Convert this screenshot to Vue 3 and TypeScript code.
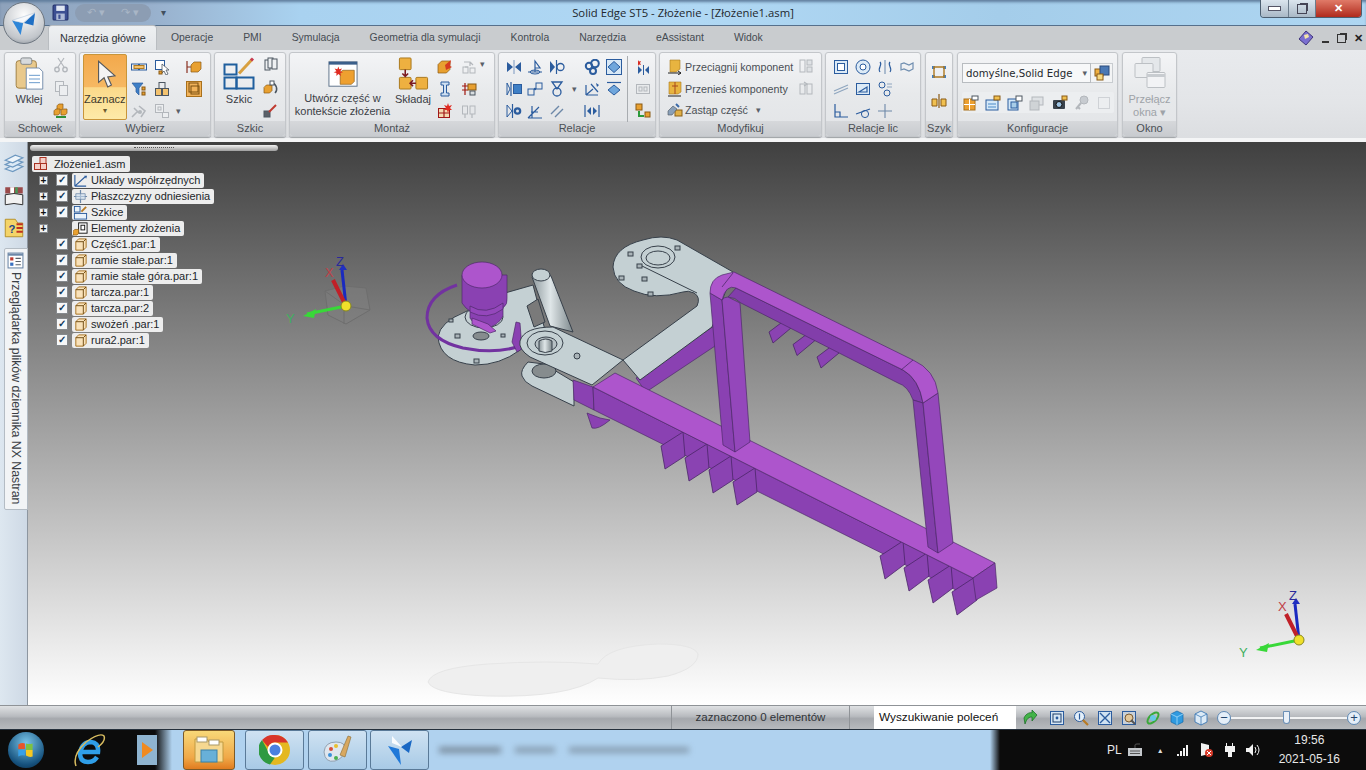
<script setup lang="ts">
// Ikony wstążki rysowane w siatce 16x16
const B = '#2b5c9e'
const O = '#e8a030'
const G = '#b3b7bc'
const D = '#4c5660'
const line = (d: string, c = B, w = 1.2) => `<path d="${d}" fill="none" stroke="${c}" stroke-width="${w}"/>`
const box = (x: number, y: number, w: number, h: number, f = 'none', c = B) =>
  `<rect x="${x}" y="${y}" width="${w}" height="${h}" fill="${f}" stroke="${c}"/>`
const cube = (x: number, y: number, s: number, c = O) =>
  `<path d="M${x} ${y + s * 0.3}l${s * 0.3} -${s * 0.3}h${s * 0.7}v${s * 0.7}l-${s * 0.3} ${s * 0.3}h-${s * 0.7}z" fill="${c}" stroke="#8a5a14" stroke-width=".7"/>`

const icons: Record<string, string> = {
  floppy: `<rect x="1" y="1" width="14" height="14" rx="1" fill="#3c4f92" stroke="#23306a"/><rect x="4" y="1.500" width="8" height="5" fill="#dfe6f2"/><rect x="4" y="9" width="8" height="6" fill="#aebbd6"/><rect x="6" y="10" width="2" height="4" fill="#3c4f92"/>`,
  cut: line('M5 10L11 1M11 10L5 1', G) + `<circle cx="4" cy="12.5" r="2.2" fill="none" stroke="${G}" stroke-width="1.4"/><circle cx="12" cy="12.5" r="2.2" fill="none" stroke="${G}" stroke-width="1.4"/>`,
  copy: box(2.5, 1.5, 8, 10, '#eceef0', G) + box(6.5, 5.5, 8, 10, '#eceef0', G),
  painter: cube(4, 1, 6) + cube(1, 6, 6) + cube(8, 6, 6) + line('M3 14h10', '#2f8f3a', 2),
  select: box(0.5, 5, 7, 6) + box(8.5, 5, 7, 6) + box(3, 6.5, 10, 3, '#f3c26e', '#b07a20'),
  selcur: box(1.5, 1.5, 9, 9, '#fff') + `<path d="M8 5l7 6h-3l2 4-2 1-2-4-2 2z" fill="#fff" stroke="${D}" stroke-width=".8"/>` + box(5, 12, 3, 3, O, '#8a5a14'),
  funnel: `<path d="M1 2h11L8 7v7L5 11V7z" fill="#3e7fc6" stroke="${B}" stroke-width=".7"/>` + box(11, 6, 3, 3, O, '#8a5a14') + box(11, 11, 3, 3, O, '#8a5a14'),
  tower: box(5, 1.5, 6, 6, 'none', D) + box(1.5, 7.5, 6, 7, '#f3c26e', D) + box(8.5, 7.5, 6, 7, '#f3c26e', D),
  gear: line('M1 14L6 9M3 5l5 5M8 3l6 5-4 6', G, 1.6) + `<circle cx="9" cy="9" r="2" fill="${G}"/>`,
  graybox: box(1.5, 1.5, 8, 8, '#eceef0', G) + box(8.5, 9.5, 6, 5, '#eceef0', G) + box(4, 4, 3, 3, 'none', G),
  plane: line('M1 2v12M1 8h4', '#8a3020') + cube(5, 3, 10),
  active: box(0.5, 0.5, 15, 15, '#f2b35a', '#a8701c') + box(3, 2, 9, 9, 'none', '#7a5010') + box(5, 5, 8, 8, 'none', '#7a5010'),
  sk2: box(2, 3, 5, 10, '#eef0f2', D) + box(5, 1, 5, 10, '#eef0f2', D) + box(9, 2, 5, 10, '#eef0f2', D),
  sk3: cube(1, 5, 8) + `<path d="M9 3a6 6 0 0 1 3 10" fill="none" stroke="${D}" stroke-width="1.5"/>` + box(7, 1, 4, 4, '#fff', D),
  sk4: box(1, 8, 6, 6, '#5a6068', D) + line('M6 9L13 2', '#c03a30', 2),
  flame: cube(1, 2, 12) + `<path d="M8 6l6-5-1 6 2 1-6 3z" fill="#d63a20"/>`,
  bolts: line('M3 3h6v4M9 3l3 3M4 8h3', G) + box(2, 8, 5, 6, 'none', G) + box(9, 9, 5, 5, 'none', G),
  screw: `<path d="M4 1h8v3H9.5v8H12v3H4v-3h2.5V4H4z" fill="#cfe0f2" stroke="${B}"/>`,
  link: line('M4 2v12M1 5h6M1 9h6', '#a01810') + box(7, 3, 8, 6, O, '#8a5a14') + box(9, 10, 5, 4, '#d8dde0', D),
  redbox: box(1.5, 5.5, 11, 9, '#f4d9b0', '#a01818') + line('M7 5.5v9M1.5 10h11', '#a01818') + `<path d="M11 0l1 3 3-1-2 3 2 2-3 0-1 3-1-3-3 0 2-2-2-3 3 1z" fill="#e02a20"/>`,
  graybolts: box(1.5, 3, 5, 8, 'none', G) + box(9, 3, 5, 8, 'none', G) + line('M4 11v4M11 11v4', G),
  mirror: `<path d="M1 3l6 5-6 5zM15 3L9 8l6 5z" fill="${B}"/><path d="M8 1v14" stroke="${B}" stroke-width=".6"/>`,
  pin: line('M1 13h14M8 13V2l5 7H8') + `<ellipse cx="8" cy="13" rx="5" ry="2" fill="none" stroke="${B}"/>`,
  tricirc: `<path d="M1 2l5 6-5 6z" fill="${B}"/>` + line('M7.5 1v14') + `<circle cx="11.5" cy="8" r="3.5" fill="none" stroke="${B}" stroke-width="1.3"/>`,
  gears: `<circle cx="11" cy="4.5" r="3.8" fill="none" stroke="${B}" stroke-width="2"/><circle cx="5" cy="7" r="3.2" fill="none" stroke="${B}" stroke-width="2"/><circle cx="9" cy="12" r="3" fill="none" stroke="${B}" stroke-width="2"/>`,
  diamond: box(0.5, 0.5, 15, 15, '#d8e8f6', B) + `<path d="M8 2.5l6 5.5-6 5.5L2 8z" fill="#6fa6dc" stroke="${B}"/>`,
  redmirror: `<path d="M3 7l4 4-4 4zM14 7l-4 4 4 4z" fill="${B}"/><path d="M8.5 6v10" stroke="${B}"/><path d="M3 1l1 1.5L6 2l-1 2 1 2-2-.5L3 7z" fill="#d82a20"/>`,
  rectmir: line('M5 1v14') + `<path d="M1 2l3 6-3 6z" fill="none" stroke="${B}"/>` + box(7.5, 3.5, 8, 9, '#3e7fc6'),
  squares: box(1, 8, 6, 6) + box(9, 2, 6, 6) + `<circle cx="8" cy="8" r="1.2" fill="${B}"/>`,
  cone: `<path d="M3 1h10L8 8z" fill="none" stroke="${B}" stroke-width="1.3"/><circle cx="8" cy="11" r="4" fill="none" stroke="${B}" stroke-width="1.3"/>`,
  axes: line('M2 14L9 8M2 14V4M2 14h12M7 3l7 8', B) + `<path d="M12 2l3 2-2 2z" fill="${B}"/>`,
  diamond2: line('M1 1.5h14') + `<path d="M8 4l6 5-6 5-6-5z" fill="#6fa6dc" stroke="${B}"/>`,
  ringmir: `<path d="M1 2l5 6-5 6z" fill="none" stroke="${B}"/>` + line('M6.5 1v14') + `<circle cx="11.5" cy="8" r="3.8" fill="${B}"/><circle cx="11.5" cy="8" r="1.5" fill="#dfe3e7"/>`,
  angle: line('M1 15h14M1 15L12 4M5 3v12M4 9h7', B),
  parallel: line('M2 11L10 3M6 14L14 6', '#6d88a8', 1.4),
  center: line('M1 2v12M15 2v12') + `<path d="M7 4L3 8l4 4zM9 4l4 4-4 4z" fill="${B}"/>`,
  ghost: box(1.5, 3.5, 13, 9, '#e8eaec', G) + box(4, 6, 3, 4, 'none', G) + box(9, 6, 3, 4, 'none', G),
  swap: box(1, 1, 6, 6, O, '#8a5a14') + line('M4 8v5h5', '#2b9a3a', 2) + box(10, 9, 5, 5, O, '#8a5a14'),
  drag: `<path d="M3 1h10v9l-4 3H3z" fill="#e8b440" stroke="#a8781c" stroke-width=".6"/>` + line('M1 14h13M11 12l3 2-3 2', '#202020', 1),
  move: `<path d="M2 1h12v10l-3 2H2z" fill="#e8b440" stroke="#a8781c" stroke-width=".6"/>` + line('M8 1v12M5 5h6', '#a8481c', 1) + line('M1 15h13', '#202020', 1),
  replace: box(8, 8, 7, 6, '#e0b048', '#8a6018') + `<path d="M1 13V9l5-5 4 3-5 6z" fill="#8aa0b8" stroke="${D}" stroke-width=".6"/>` + line('M9 2l3 3', '#3b6aa8', 2),
  modg1: box(2, 2, 5, 12, 'none', G) + box(9, 2, 5, 5, '#dfe2e5', G) + box(9, 9, 5, 5, '#dfe2e5', G),
  modg2: box(2, 4, 5, 10, 'none', G) + box(9, 4, 5, 10, 'none', G) + line('M6 2l3 2-3 2', G),
  sqsq: box(1.5, 1.5, 13, 13, '#dceaf6') + box(4.5, 4.5, 7, 7, '#fff'),
  ring: `<circle cx="8" cy="8" r="7" fill="#dceaf6" stroke="${B}"/><circle cx="8" cy="8" r="3" fill="#fff" stroke="${B}"/>`,
  sym: line('M8 1v14', '#7d98b8') + `<path d="M3 3c3 3-3 6 0 10M13 3c-3 3 3 6 0 10" fill="none" stroke="${B}" stroke-width="1.2"/>`,
  sym2: line('M2 5v6l3-1 5 2 4-2V4l-4 2-5-2z', '#6f8eb0'),
  slash: line('M1 10l14-6M1 13l14-6', '#8fa6bf', 1.2),
  facer: box(1.5, 2.5, 13, 11, '#dceaf6') + line('M4 11l8-5v5z'),
  circles: `<circle cx="5" cy="4" r="3" fill="none" stroke="${B}"/><circle cx="10" cy="12" r="3" fill="none" stroke="${B}"/>` + line('M10 3h5M10 6h5', '#8fa6bf'),
  corner: line('M2 1v13h13M2 9h5v5', B),
  tang: line('M1 11l14-5') + `<circle cx="10" cy="11" r="3.6" fill="none" stroke="${B}"/>`,
  plus: line('M8 1v14M1 8h14', '#6d88a8', 1.1),
  pat1: `<rect x="1" y="2" width="3" height="3" fill="#3e7fc6"/><rect x="12" y="2" width="3" height="3" fill="#3e7fc6"/><rect x="1" y="11" width="3" height="3" fill="#3e7fc6"/><rect x="12" y="11" width="3" height="3" fill="#3e7fc6"/>` + line('M3 3h10v10H3z', '#b07a20', 1.4),
  pat2: line('M8 1v14', '#8a5a14') + `<path d="M1 6h5v7H1zM10 6h5v7h-5z" fill="#f0c050" stroke="#8a5a14"/>`,
  save: box(1, 4, 8, 7, '#f0b040', '#8a5a14') + box(6, 1, 9, 9, '#4a78b4', '#2a4a7c') + box(3, 9, 6, 6, '#f7d880', '#8a5a14'),
  cfg1: `<rect x="1" y="4" width="11" height="11" fill="#eca030" stroke="#a8701c"/><path d="M1 9.5h11M6.5 4v11" stroke="#fff"/>` + box(9, 1, 6, 4, '#fff', D),
  cfg2: box(1, 5, 12, 10, '#d4e8f8') + line('M3 9h8M3 12h8', '#4a8ac8') + box(9, 1, 6, 4, '#f0c050', '#8a5a14'),
  cfg3: box(1, 4, 10, 11, '#d4e8f8') + box(4, 7, 6, 6, '#a8cde8') + box(9, 1, 6, 5, '#fff', D),
  cfg4: box(3, 2, 11, 8, '#dfe2e5', G) + box(1, 6, 9, 9, '#cfd3d6', G),
  camera: `<rect x="1" y="5" width="12" height="9" rx="1" fill="#39424c"/><circle cx="7" cy="9.5" r="3" fill="#9ec4e4" stroke="#111"/>` + box(10, 1, 5, 4, '#f0c050', '#8a5a14'),
  key: `<circle cx="10" cy="5" r="4" fill="#c7cbd0" stroke="${G}"/>` + line('M7 8l-5 6M4 12l2 2', G, 2),
  dots: `<rect x="2.5" y="2.5" width="11" height="11" fill="none" stroke="${G}" stroke-dasharray="1 1"/>`,
  arrow: `<path d="M2 8c2-5 7-6 8-5V0l5 5-5 6V7C7 7 5 8 3 14z" fill="#43b348" stroke="#146a20" stroke-width=".7"/>`,
  zoomArea: box(1.5, 1.5, 13, 13, '#d6e6f4') + box(4, 4, 8, 8, 'none', '#1d3c68') + `<circle cx="8" cy="8" r="1.4" fill="${B}"/>`,
  zoomLens: `<circle cx="6.5" cy="6.5" r="5" fill="#e4f0fa" stroke="${B}"/>` + line('M10 10l5 5', '#b87a24', 2.2) + line('M6.5 3.5v6', B),
  fit: box(1.5, 1.5, 13, 13, '#cfe2f2') + line('M3 3l10 10M13 3L3 13', B, 1.4),
  sheet: box(1.5, 1.5, 13, 13, '#c8d0d8') + `<circle cx="8" cy="8" r="4" fill="#e2c79a" stroke="#7a5a30"/>` + line('M10 10l4 4', '#555', 2),
  orbit: `<ellipse cx="8" cy="8" rx="7" ry="3.5" transform="rotate(-45 8 8)" fill="none" stroke="#3aa83a" stroke-width="2"/><circle cx="8" cy="8" r="3" fill="#66c8e8"/>`,
  shade: `<path d="M8 1l6 3v8l-6 3-6-3V4z" fill="#2f9ae0" stroke="#1668a8" stroke-width=".7"/><path d="M8 7v8M2 4l6 3 6-3" stroke="#a4dcfa" fill="none" stroke-width=".8"/>`,
  wire: `<path d="M8 1l6 3v8l-6 3-6-3V4z" fill="#dceaf6" stroke="#3c78b4" stroke-width=".9"/><path d="M8 7v8M2 4l6 3 6-3" stroke="#3c78b4" fill="none" stroke-width=".8"/>`,
  layers: `<path d="M1 12l8-4 6 2-8 4z" fill="#dceaf6" stroke="#6d98c0"/><path d="M1 8.5l8-4 6 2-8 4z" fill="#dceaf6" stroke="#6d98c0"/><path d="M1 5l8-4 6 2-8 4z" fill="#eef5fb" stroke="#6d98c0"/>`,
  books: `<rect x="1" y="1" width="14" height="5" fill="#9a4a4a"/><rect x="5" y="1" width="3" height="5" fill="#fff"/><rect x="9" y="1" width="2" height="5" fill="#4a9a5a"/><path d="M1 15V7l7-1 7 1v8l-7-1z" fill="#f2f2f2" stroke="#333" stroke-width=".8"/>`,
  help: `<path d="M1 1h8l2 3h4v11H1z" fill="#f4d468" stroke="#b08a20" stroke-width=".7"/><path d="M10 5h5M10 8h5M10 11h5" stroke="#c03020" stroke-width="1.5"/><text x="3.5" y="12" font-size="9" font-weight="700" font-family="Liberation Sans" fill="#20468a">?</text>`,
  logbrowser: box(1, 1, 14, 14, '#fff', '#6d88a8') + `<rect x="3" y="5" width="3" height="3" fill="#c03a30"/><rect x="3" y="10" width="3" height="3" fill="#3a70c0"/><path d="M8 6h5M8 9h5M8 12h5" stroke="#5a6068"/><path d="M1 2.5h14" stroke="#6d88a8" stroke-width="2"/>`,
  asm: box(7, 1.5, 6, 6, '#f4cfc8', '#a83020') + box(1.5, 7.5, 6, 6, '#f4cfc8', '#a83020') + box(7.5, 7.5, 6, 6, '#f4cfc8', '#a83020'),
  coord: line('M2 14V2M2 14h12M2 14L13 4', B) + `<path d="M12 3l3 0-1 3z" fill="${B}"/>`,
  planes: line('M8 1v14M1 8h14', '#6d88a8', 1.3) + `<path d="M3 5l10 0v6l-10 0z" fill="#cfe0f0" fill-opacity=".6" stroke="#6d88a8" stroke-width=".8"/>`,
  sketch: box(1.5, 1.5, 6, 6, '#eaf2fa') + box(1.5, 9, 13, 6, '#eaf2fa') + line('M9 7l5-5', '#b87a24', 2),
  elem: box(6, 2, 9, 11, '#fff', '#111') + box(8.5, 4.5, 4, 5, 'none', '#111') + cube(0, 9, 6),
  part: `<path d="M3 5l3-3h8v9l-3 3H3z" fill="#f9e2ba" stroke="#a8701c"/><path d="M3 5h8v9M11 5l3-3" fill="none" stroke="#6e4a10"/>`,
}

type Cell = string | null
const wybierz: Cell[] = ['select', 'selcur', 'plane', 'funnel', 'tower', 'active', 'gear', 'graybox', null]
const szkicSide = ['sk2', 'sk3', 'sk4']
const montaz: Cell[] = ['flame', 'bolts', 'screw', 'link', 'redbox', 'graybolts']
const relacje: Cell[] = [
  'mirror', 'pin', 'tricirc', 'gears', 'diamond', 'redmirror',
  'rectmir', 'squares', 'cone', 'axes', 'diamond2', 'ghost',
  'ringmir', 'angle', 'parallel', 'center', null, 'swap',
]
const relLic = ['sqsq', 'ring', 'sym', 'sym2', 'slash', 'facer', 'circles', null, 'corner', 'tang', 'plus', null]
const konfig = ['cfg1', 'cfg2', 'cfg3', 'cfg4', 'camera', 'key', 'dots']
const statusTools = ['arrow', 'zoomArea', 'zoomLens', 'fit', 'sheet', 'orbit', 'shade', 'wire']
const tabs = ['Operacje', 'PMI', 'Symulacja', 'Geometria dla symulacji', 'Kontrola', 'Narzędzia', 'eAssistant', 'Widok']

const tree = [
  { label: 'Układy współrzędnych', icon: 'coord', plus: true, check: true },
  { label: 'Płaszczyzny odniesienia', icon: 'planes', plus: true, check: true },
  { label: 'Szkice', icon: 'sketch', plus: true, check: true },
  { label: 'Elementy złożenia', icon: 'elem', plus: true, check: false },
  { label: 'Część1.par:1', icon: 'part', plus: false, check: true },
  { label: 'ramie stałe.par:1', icon: 'part', plus: false, check: true },
  { label: 'ramie stałe góra.par:1', icon: 'part', plus: false, check: true },
  { label: 'tarcza.par:1', icon: 'part', plus: false, check: true },
  { label: 'tarcza.par:2', icon: 'part', plus: false, check: true },
  { label: 'swożeń .par:1', icon: 'part', plus: false, check: true },
  { label: 'rura2.par:1', icon: 'part', plus: false, check: true },
]

// Żebra pod belką - kolejne przesunięte o (-24,-12)
const fins = [3, 2, 1, 0].map(i => i * 24)
const finsTop = [0, 1, 2]
const plateNuts = [[628, 252], [619, 276], [642, 277], [648, 292], [637, 264], [675, 246]]
</script>

<template>
  <div class="app">
    <header class="titlebar">
      <div class="quick">
        <svg class="qsave" viewBox="0 0 16 16" v-html="icons.floppy"></svg>
        <div class="undo-pill"><span class="dimglyph">↶ ▾</span><span class="dimglyph">↷ ▾</span></div>
        <span class="qmore">▾</span>
      </div>
      <div class="title">Solid Edge ST5 - Złożenie - [Złożenie1.asm]</div>
      <div class="caption-wrap">
        <div class="caption">
          <span class="cbtn cbtn-min"><i class="cmin"></i></span>
          <span class="cbtn"><i class="cmax"></i></span>
          <span class="cbtn cclose">✕</span>
        </div>
      </div>
    </header>

    <div class="orb">
      <svg viewBox="0 0 40 40" width="34" height="34">
        <path d="M6 17l13 3-3 14z" fill="#2f86d8" />
        <path d="M20 20l13-12-2 15z" fill="#1f6fc4" />
        <path d="M6 17l27-9-14 12z" fill="#f6f8fb" stroke="#9ab2cc" stroke-width=".5" />
      </svg>
    </div>

    <nav class="tabs">
      <span class="tab tab-active">Narzędzia główne</span>
      <span v-for="t in tabs" :key="t" class="tab">{{ t }}</span>
      <div class="tab-right">
        <svg class="gem" viewBox="0 0 16 16">
          <path d="M8 1l7 6-7 8-7-6z" fill="#7a6fd0" stroke="#40357c" />
          <path d="M6 5l4-1 1 3-4 2z" fill="#f4e4a8" />
        </svg>
        <i class="mdi-min"></i>
        <i class="mdi-rest"></i>
        <span class="mdi-x">✕</span>
      </div>
    </nav>

    <section class="ribbon">
      <div class="group g-schowek">
        <div class="body">
          <div class="big big-paste">
            <svg class="bigicon" viewBox="0 0 32 36">
              <rect x="2" y="4" width="22" height="30" rx="3" fill="#e9c98c" stroke="#9a7a3c" />
              <rect x="7" y="1" width="12" height="7" rx="2" fill="#d7dadd" stroke="#7c8288" />
              <path d="M13 12h14l4 4v19H13z" fill="#fff" stroke="#6d88a8" />
              <path d="M16 20h12M16 24h12M16 28h12" stroke="#5e93c8" />
            </svg>
            <span class="biglabel">Wklej</span>
          </div>
          <div class="col">
            <svg v-for="n in ['cut', 'copy', 'painter']" :key="n" class="ico" viewBox="0 0 16 16" v-html="icons[n]"></svg>
          </div>
        </div>
        <div class="cap">Schowek</div>
      </div>

      <div class="group g-wybierz">
        <div class="body">
          <div class="zaznacz">
            <svg class="zarrow" viewBox="0 0 24 32">
              <path d="M5 1v23l6-5 4 10 4-2-4-9 8-1z" fill="#f4f4f4" stroke="#55585c" stroke-width="1.2" />
            </svg>
            <span class="zlabel">Zaznacz</span>
            <span class="zdrop">▾</span>
          </div>
          <div class="grid grid-wybierz">
            <template v-for="(n, i) in wybierz" :key="i">
              <svg v-if="n" class="ico" viewBox="0 0 16 16" v-html="icons[n]"></svg>
              <span v-else class="chev chev-left">▾</span>
            </template>
          </div>
        </div>
        <div class="cap">Wybierz</div>
      </div>

      <div class="group g-szkic">
        <div class="body">
          <div class="big big-szkic">
            <svg class="bigicon" viewBox="0 0 32 32">
              <rect x="1.500" y="7" width="12" height="10" fill="none" stroke="#1f5f9e" stroke-width="2" />
              <rect x="1.500" y="20" width="12" height="11" fill="none" stroke="#1f5f9e" stroke-width="2" />
              <rect x="13.500" y="20" width="17" height="11" fill="none" stroke="#1f5f9e" stroke-width="2" />
              <path d="M16 16L29 2" stroke="#d8a040" stroke-width="3" />
              <path d="M28 3l2-2" stroke="#c83a50" stroke-width="3" />
            </svg>
            <span class="biglabel">Szkic</span>
          </div>
          <div class="col">
            <svg v-for="n in szkicSide" :key="n" class="ico" viewBox="0 0 16 16" v-html="icons[n]"></svg>
          </div>
        </div>
        <div class="cap">Szkic</div>
      </div>

      <div class="group g-montaz">
        <div class="body">
          <div class="big big-utworz">
            <svg class="bigicon-w" viewBox="0 0 32 28">
              <rect x="1" y="1" width="30" height="26" fill="#fff" stroke="#5a7088" />
              <rect x="1" y="1" width="30" height="3" fill="#3b5f8a" />
              <path d="M13 12l3-2h12v12l-3 3H13z" fill="#eea030" stroke="#8a5a14" stroke-width=".7" />
              <path d="M11 6l1 3 3-1-2 3 3 1-3 1 1 3-3-2-2 2 0-3-3-1 3-1-2-3 3 1z" fill="#e02a20" />
            </svg>
            <span class="biglabel two">Utwórz część w<br />kontekście złożenia</span>
          </div>
          <div class="big big-skladaj">
            <svg class="bigicon" viewBox="0 0 32 34">
              <rect x="2" y="1" width="12" height="12" rx="1" fill="#eeb040" stroke="#a8781c" />
              <rect x="2" y="21" width="12" height="12" rx="1" fill="#eeb040" stroke="#a8781c" />
              <rect x="19" y="21" width="12" height="12" rx="1" fill="#eeb040" stroke="#a8781c" />
              <path d="M8 13v7M5 17l3 3 3-3M19 27h-6M16 24l-3 3 3 3" stroke="#7a1a20" stroke-width="1.6" fill="none" />
            </svg>
            <span class="biglabel">Składaj</span>
          </div>
          <div class="grid grid-montaz">
            <svg v-for="n in montaz" :key="n" class="ico" viewBox="0 0 16 16" v-html="icons[n]"></svg>
          </div>
          <span class="chev chev-montaz">▾</span>
        </div>
        <div class="cap">Montaż</div>
      </div>

      <div class="group g-relacje">
        <div class="body">
          <div class="grid grid-relacje">
            <template v-for="(n, i) in relacje" :key="i">
              <i v-if="i % 6 === 5" class="rel-sep"></i>
              <i v-if="i % 6 === 3" class="rel-chev"><span v-if="i === 9" class="chev">▾</span></i>
              <svg v-if="n" class="ico" viewBox="0 0 16 16" v-html="icons[n]"></svg>
              <i v-else></i>
            </template>
          </div>
        </div>
        <div class="cap">Relacje</div>
      </div>

      <div class="group g-modyfikuj">
        <div class="body body-mod">
          <div class="mod-list">
            <div class="mod-row"><svg class="ico" viewBox="0 0 16 16" v-html="icons.drag"></svg>Przeciągnij komponent</div>
            <div class="mod-row"><svg class="ico" viewBox="0 0 16 16" v-html="icons.move"></svg>Przenieś komponenty</div>
            <div class="mod-row"><svg class="ico" viewBox="0 0 16 16" v-html="icons.replace"></svg>Zastąp część<span class="chev chev-mod">▾</span></div>
          </div>
          <div class="col col-mod">
            <svg class="ico" viewBox="0 0 16 16" v-html="icons.modg1"></svg>
            <svg class="ico" viewBox="0 0 16 16" v-html="icons.modg2"></svg>
          </div>
        </div>
        <div class="cap">Modyfikuj</div>
      </div>

      <div class="group g-rellic">
        <div class="body">
          <div class="grid grid-rellic">
            <template v-for="(n, i) in relLic" :key="i">
              <svg v-if="n" class="ico" viewBox="0 0 16 16" v-html="icons[n]"></svg>
              <i v-else></i>
            </template>
          </div>
        </div>
        <div class="cap">Relacje lic</div>
      </div>

      <div class="group g-szyk">
        <div class="body body-szyk">
          <svg class="ico" viewBox="0 0 16 16" v-html="icons.pat1"></svg>
          <svg class="ico" viewBox="0 0 16 16" v-html="icons.pat2"></svg>
        </div>
        <div class="cap">Szyk</div>
      </div>

      <div class="group g-konfig">
        <div class="body body-konfig">
          <div class="combo-row">
            <div class="combo">domyślne,Solid Edge<span class="chev">▾</span></div>
            <span class="combo-save"><svg class="ico" viewBox="0 0 16 16" v-html="icons.save"></svg></span>
          </div>
          <div class="cfg-bar">
            <svg v-for="n in konfig" :key="n" class="ico" viewBox="0 0 16 16" v-html="icons[n]"></svg>
          </div>
        </div>
        <div class="cap">Konfiguracje</div>
      </div>

      <div class="group g-okno">
        <div class="body">
          <div class="big big-okno">
            <svg class="bigicon" viewBox="0 0 32 32">
              <rect x="8" y="1" width="18" height="14" rx="1" fill="#e4e7ea" stroke="#bcc0c4" />
              <rect x="1" y="7" width="18" height="14" rx="1" fill="#eceef0" stroke="#bcc0c4" />
              <rect x="13" y="16" width="18" height="15" rx="1" fill="#f2f3f5" stroke="#bcc0c4" />
              <path d="M13 19h18" stroke="#c8ccd0" stroke-width="3" />
            </svg>
            <span class="biglabel two dim">Przełącz<br />okna ▾</span>
          </div>
        </div>
        <div class="cap">Okno</div>
      </div>
      <div class="ribbon-rest"></div>
    </section>

    <main class="workspace">
      <aside class="sidebar">
        <svg class="side-ico" viewBox="0 0 16 16" v-html="icons.layers"></svg>
        <svg class="side-ico" viewBox="0 0 16 16" v-html="icons.books"></svg>
        <svg class="side-ico" viewBox="0 0 16 16" v-html="icons.help"></svg>
        <div class="side-tab">
          <svg class="side-ico-s" viewBox="0 0 16 16" v-html="icons.logbrowser"></svg>
          <span class="side-text">Przeglądarka plików dziennika NX Nastran</span>
        </div>
      </aside>

      <div class="viewport">
        <svg class="scene" viewBox="28 142 1338 563" width="1338" height="563">
          <defs>
            <linearGradient id="pipeg" x1="0" y1="0" x2="1" y2="0">
              <stop offset="0" stop-color="#8f9a9e" />
              <stop offset=".45" stop-color="#dfe6e8" />
              <stop offset="1" stop-color="#7d888c" />
            </linearGradient>
          </defs>

          <!-- cień modelu na podłodze -->
          <path class="shadow" d="M428 682q4-14 60-18q60-4 110 0q10-18 60-20q36 0 40 10q0 14-30 22q-30 6-70 2q-30 20-110 18q-55-2-60-14z" />

          <!-- dolna tarcza z ramieniem -->
          <path class="pl" d="M438 337Q440 322 465 312L505 293L533 285L545 330L530 340L520 350Q500 365 475 365Q440 362 438 337z" />
          <path class="bg-hole" d="M527 306L538 299L545 322L534 327z" />
          <ellipse class="pl" cx="484" cy="317" rx="19" ry="11" />
          <ellipse class="hole" cx="481" cy="336" rx="8" ry="4" />
          <rect class="nut" x="455" y="334" width="5" height="4" />
          <rect class="nut" x="474" y="359" width="5" height="4" />
          <rect class="nut" x="449" y="319" width="4" height="3" />
          <rect class="nut" x="501" y="334" width="4" height="3" />

          <!-- walec fioletowy -->
          <path class="pt-d" d="M462 275v28q4 6 8 8v7q4 8 16 10q12-2 17-12v-8q5-4 4-10v-23z" />
          <path class="pt-d2" d="M470 306q16 10 33-3v6q-16 12-33 3z" />
          <ellipse class="pt" cx="482" cy="275" rx="20" ry="13" />
          <path class="pt" d="M472 318l16 6 8 7-6 2-18-9z" />

          <!-- łuk -->
          <path class="arc" d="M457 285q-30 10-30 33q2 22 36 30q30 6 54-1" />
          <path class="pt-d" d="M516 322l4 1 2 26-5 3-5-10z" />

          <!-- rura -->
          <path class="pipe" d="M532 277q9-8 19-1L573 332L550 326z" />
          <ellipse class="pl" cx="541" cy="275" rx="9" ry="6" />

          <!-- dolne łącze -->
          <path class="pl" d="M528 362q-8 8-6 14q2 6 10 10l42 20v-24l-30-18z" />
          <ellipse class="hole" cx="544" cy="371" rx="12" ry="7" />

          <!-- drugi fioletowy pręt -->
          <path class="pt-d" d="M636 378L714 326L718 344L646 392z" />

          <!-- górna płyta -->
          <path class="pl" d="M613 267Q614 247 643 240Q662 234 677 240L733 272L712 327L640 380L623 360L697 306Q701 297 694 293Q688 290 683 292Q655 300 634 291Q614 284 613 267z" />
          <ellipse class="pl-line" cx="658" cy="257" rx="17" ry="11" />
          <ellipse class="pl-line" cx="658" cy="258" rx="12" ry="7" />
          <path class="pl-line" d="M640 265L697 293" />
          <rect v-for="(p, i) in plateNuts" :key="i" class="nut" :x="p[0]" :y="p[1]" width="5" height="4" />

          <!-- płytka łącząca -->
          <path class="pl" d="M553 327l70 33-31 25-62-28q-12-8-10-16q4-14 33-14z" />
          <ellipse class="pl-line" cx="545" cy="343" rx="18" ry="12" />
          <ellipse class="hole2" cx="546" cy="344" rx="11" ry="7" />
          <path class="pipe" d="M539 341q7-4 13 0v10q-7 3-13 0z" />
          <circle class="nut" cx="577" cy="356" r="3" />

          <!-- belka główna -->
          <path class="pt-d" d="M573 380l20 7 1 23-20-10z" />
          <path class="pt-d" d="M587 413L592 428Q598 430 610 420L600 418z" />
          <path class="pt-d" d="M593 387L973 578L976 600L594 410z" />
          <g v-for="o in fins" :key="'l' + o" :transform="`translate(${-o} ${-o / 2})`">
            <path class="fin" d="M733 482L755 468L757 492L737 505z" />
          </g>
          <g v-for="o in fins" :key="'r' + o" :transform="`translate(${-o} ${-o / 2})`">
            <path class="fin" d="M952 592L975 577L977 600L957 615z" />
          </g>
          <path class="pt" d="M615 373L995 563L973 578L593 387z" />
          <path class="pt-d" d="M973 578L995 563L997 588L976 600z" />

          <!-- rama -->
          <g v-for="i in finsTop" :key="'t' + i" :transform="`translate(${i * 24} ${i * 12.5})`">
            <path class="fin" d="M789 317L791 328L773 343L769 332z" />
          </g>
          <path class="pt-d3" d="M736 288L903 370Q919 379 923 403L913 400Q908 386 898 383L741 303Q735 297 728 297z" />
          <path class="pt-d" d="M710 293L723 445L735 452L722 300z" />
          <path class="pt-d2" d="M722 300q2-3 6-3l12 6 10 139-15 10z" />
          <path class="pt-d3" d="M913 400l10 3 15 150-10-6z" />
          <path class="pt-d2" d="M923 403l15-10 15 150-15 10z" />
          <path class="pt" d="M710 293Q710 279 722 275L734 272L913 360Q935 370 938 393L923 403Q919 379 903 370L736 288Q726 284 722 300z" />
          <path class="edge" d="M733 273L722 287M913 360L901 370" />
        </svg>

        <svg class="triad triad-a" viewBox="0 0 90 80">
          <path class="ghostbox" d="M39 29l19-5 22 2 4 22-24 14-18-9z" />
          <path class="ghostline" d="M58 24v38M39 29l21 15 24 4" />
          <path d="M60 44L56 8" class="tz" />
          <path d="M53 8l4-6 4 6z" fill="#2030c0" />
          <path d="M60 44L47 18" class="tx" />
          <path d="M60 44L21 52" class="ty" />
          <path d="M17 54l13-7-2 9z" fill="#38d838" />
          <circle cx="60" cy="44" r="5" fill="#f0e02a" stroke="#888820" />
          <text x="50" y="4" class="lz">Z</text>
          <text x="39" y="15" class="lx">X</text>
          <text x="0" y="61" class="ly">Y</text>
        </svg>
        <svg class="triad triad-b" viewBox="0 0 90 80">
          <path d="M60 44L56 8" class="tz" />
          <path d="M53 8l4-6 4 6z" fill="#2030c0" />
          <path d="M60 44L47 18" class="tx" />
          <path d="M60 44L21 52" class="ty" />
          <path d="M17 54l13-7-2 9z" fill="#38d838" />
          <circle cx="60" cy="44" r="5" fill="#f0e02a" stroke="#888820" />
          <text x="50" y="4" class="lz">Z</text>
          <text x="39" y="15" class="lx">X</text>
          <text x="0" y="61" class="ly">Y</text>
        </svg>

        <div class="splitter"><i class="grip"></i></div>

        <div class="tree">
          <div class="node root">
            <svg class="ico" viewBox="0 0 16 16" v-html="icons.asm"></svg>
            <span class="node-text">Złożenie1.asm</span>
          </div>
          <div v-for="r in tree" :key="r.label" class="row">
            <span class="expander"><i v-if="r.plus" class="plusbox">+</i></span>
            <span class="checkslot"><i v-if="r.check" class="check">✓</i></span>
            <div class="node">
              <svg class="ico-s" viewBox="0 0 16 16" v-html="icons[r.icon]"></svg>
              <span class="node-text">{{ r.label }}</span>
            </div>
          </div>
        </div>
      </div>
    </main>

    <footer class="status">
      <div class="status-msg">zaznaczono 0 elementów</div>
      <div class="status-gap"></div>
      <div class="search">Wyszukiwanie poleceń</div>
      <div class="status-tools">
        <svg v-for="n in statusTools" :key="n" class="ico" viewBox="0 0 16 16" v-html="icons[n]"></svg>
      </div>
      <div class="zoomer">
        <i class="zbtn">−</i>
        <div class="ztrack"><i class="zthumb"></i></div>
        <i class="zbtn">+</i>
      </div>
    </footer>

    <div class="taskbar">
      <div class="task-left">
        <div class="start">
          <svg viewBox="0 0 20 20" width="22" height="22">
            <path d="M3 5q3-2 6-1v5H3z" fill="#e8552a" />
            <path d="M10 4q3 1 6 0v6h-6z" fill="#7ec240" />
            <path d="M3 10h6v5q-3-1-6 1z" fill="#38a0e8" />
            <path d="M10 10h6v6q-3 1-6-1z" fill="#f8c820" />
          </svg>
        </div>
        <svg class="ie" viewBox="0 0 34 34">
          <path d="M9 19h17q1-9-7-10q-9 0-11 11q0 9 8 9q6 0 9-5" fill="none" stroke="#2f9ee8" stroke-width="4.500" />
          <path d="M4 33Q0 22 14 9Q28 -1 32 3Q34 8 26 14" fill="none" stroke="#d8bc60" stroke-width="1.500" />
        </svg>
        <div class="player"><i></i></div>
      </div>
      <div class="task-btn task-explorer">
        <svg viewBox="0 0 32 30" width="32" height="30">
          <path d="M2 4h12l2 3h14v20H2z" fill="#f6d890" stroke="#c09a40" />
          <rect x="4" y="2" width="10" height="5" fill="#fff" stroke="#a89868" />
          <rect x="16" y="5" width="10" height="5" fill="#fff" stroke="#a89868" />
          <rect x="8" y="15" width="16" height="12" fill="#68b0d8" stroke="#3a80a8" />
        </svg>
      </div>
      <div class="task-btn task-chrome">
        <svg viewBox="0 0 32 32" width="32" height="32">
          <circle cx="16" cy="16" r="15" fill="#e4b820" />
          <path d="M16 1a15 15 0 0 1 13 7.500H16a7.500 7.500 0 0 0-7 4.500L3 6a15 15 0 0 1 13-5z" fill="#d8352a" />
          <path d="M3 6l6.500 12a7.500 7.500 0 0 0 6.500 5.500L11 30.500A15 15 0 0 1 3 6z" fill="#2f9a42" />
          <circle cx="16" cy="16" r="7.500" fill="#fff" />
          <circle cx="16" cy="16" r="5.500" fill="#4a80e0" />
        </svg>
      </div>
      <div class="task-btn task-paint">
        <svg viewBox="0 0 32 32" width="32" height="32">
          <path d="M3 18q1-10 12-10q10 0 9 8q-1 8-10 11q-10 2-11-9z" fill="#dfe6ee" stroke="#90a0b0" />
          <circle cx="10" cy="15" r="2" fill="#d8503a" />
          <circle cx="15" cy="12" r="2" fill="#e8c030" />
          <circle cx="9" cy="21" r="2" fill="#3a90d8" />
          <circle cx="15" cy="24" r="2" fill="#4ab050" />
          <path d="M19 21L27 2l3 1-6 20z" fill="#d8a860" stroke="#8a6a30" stroke-width=".6" />
        </svg>
      </div>
      <div class="task-btn task-se">
        <svg viewBox="0 0 32 32" width="32" height="32">
          <path d="M4 12l11 3 2 16z" fill="#1f78d8" />
          <path d="M17 13l11-7-3 13z" fill="#1a68c4" />
          <path d="M8 2l10 11-10-4z" fill="#fafcfe" />
        </svg>
      </div>
      <div class="task-blur">
        <i class="blur-a"></i><i class="blur-b"></i><i class="blur-c"></i>
      </div>
      <div class="tray">
        <span class="lang">PL</span>
        <svg class="tray-kb" viewBox="0 0 16 14"><rect x="1" y="5" width="14" height="8" fill="#c4c8cc" /><path d="M3 8h10M3 10.500h10M8 5V2q0-1 2-1h3" stroke="#555" fill="none" /></svg>
        <span class="tray-up">▲</span>
        <svg class="tray-sig" viewBox="0 0 14 14"><path d="M1 11h2v2H1zM4 8h2v5H4zM7 5h2v8H7zM10 2h2v11h-2z" fill="#f2f2f2" /></svg>
        <svg class="tray-flag" viewBox="0 0 14 16"><path d="M1 1l8 2v9l-8 2z" fill="#f2f2f2" /><circle cx="9" cy="11" r="4" fill="#d83a2a" /><path d="M7 9l4 4M11 9l-4 4" stroke="#fff" /></svg>
        <svg class="tray-pow" viewBox="0 0 14 16"><path d="M3 1h1v3h5V1h1v3h2v6H9v5H5v-5H2V4h1z" fill="#f2f2f2" /></svg>
        <svg class="tray-vol" viewBox="0 0 16 14"><path d="M1 5h3l4-4v12L4 9H1z" fill="#f2f2f2" /><path d="M10 4q2 3 0 6M12 2q4 5 0 10" stroke="#f2f2f2" fill="none" /></svg>
        <div class="clock"><span>19:56</span><span>2021-05-16</span></div>
      </div>
    </div>
  </div>
</template>

<style>
html, body { margin: 0; background: #000; }
</style>

<style scoped>
.app {
  position: relative;
  width: 1366px;
  height: 770px;
  display: flex;
  flex-direction: column;
  overflow: hidden;
  font-family: "Liberation Sans", Arial, sans-serif;
  font-size: 11px;
  color: #3b4046;
}

/* pasek tytułu */
.titlebar {
  height: 26px;
  display: grid;
  grid-template-columns: 1fr auto 1fr;
  align-items: center;
  background: linear-gradient(90deg, #8ea2bb 0, #98b0cc 150px, #a9d2f0 300px, #b0d8f4 700px, #a4cdea 1000px, #aed6f2 1366px);
  border-bottom: 1px solid #56708c;
  box-sizing: border-box;
  box-shadow: inset 0 3px 3px -1px #5f7c9c;
}
.quick { display: flex; align-items: center; padding-left: 52px; gap: 6px; }
.qsave { width: 17px; height: 17px; }
.undo-pill {
  width: 76px; height: 18px; border-radius: 9px; background: #8c9db3;
  display: flex; align-items: center; justify-content: space-around; padding: 0 4px; box-sizing: border-box;
}
.dimglyph { color: #a9b6c6; font-size: 11px; }
.qmore { color: #42505e; font-size: 10px; margin-left: 4px; }
.title { font-family: "Open Sans", sans-serif; font-size: 11.3px; color: #22272c; white-space: nowrap; }
.caption-wrap { display: flex; justify-content: flex-end; align-self: start; padding-right: 4px; }
.caption {
  display: flex; height: 17px; border: 1px solid #4c5e70; border-top: 0; border-radius: 0 0 4px 4px; overflow: hidden;
}
.cbtn {
  width: 27px; display: flex; align-items: center; justify-content: center; box-sizing: border-box;
  background: linear-gradient(#dbe5ee, #a9b8c6); border-right: 1px solid #6c7c8c;
}
.cbtn-min { width: 28px; }
.cclose { width: 45px; border: 0; background: linear-gradient(#e07a68, #b02a1c); color: #fff; font-size: 11px; font-weight: 700; }
.cmin { width: 11px; height: 3px; background: #fff; border: 1px solid #556; }
.cmax { width: 8px; height: 8px; border: 1px solid #445; box-shadow: 2px -2px 0 -1px #445; }

.orb {
  position: absolute; left: 3px; top: 2px; width: 42px; height: 42px; border-radius: 50%; box-sizing: border-box;
  display: flex; align-items: center; justify-content: center; z-index: 3;
  background: radial-gradient(circle at 50% 30%, #fdfdfd, #c2c6cb 70%, #7d848c);
  border: 1px solid #6d7680;
}

/* karty */
.tabs {
  height: 24px; display: flex; align-items: flex-end; padding-left: 45px;
  background: #c9cccf; font-size: 10.4px; box-sizing: border-box;
}
.tab { padding: 0 15px; line-height: 24px; white-space: nowrap; color: #454b52; }
.tab-active {
  background: linear-gradient(#eef0f2, #e3e6e9); border-radius: 3px 3px 0 0; color: #2e3338;
  box-shadow: 0 0 0 1px #b9bdc1; margin-left: 4px; padding: 0 11px; width: 107px; box-sizing: border-box; font-size: 10.8px;
}
.tab-right { margin-left: auto; display: flex; align-items: center; height: 24px; gap: 8px; padding-right: 3px; }
.gem { width: 16px; height: 16px; }
.mdi-min { width: 7px; height: 2px; background: #333; margin-top: 8px; }
.mdi-rest { width: 7px; height: 7px; border: 1px solid #333; box-shadow: 2px -2px 0 -1px #333; }
.mdi-x { font-size: 11px; font-weight: 700; color: #222; }

/* wstążka */
.ribbon {
  height: 92px; display: flex; gap: 3px; padding: 2px 4px 0; box-sizing: border-box;
  background: linear-gradient(#e8eaed, #e3e5e8 60%, #dcdee1);
  border-bottom: 4px solid #f4f5f6;
}
.ribbon-rest { flex: 1; }
.group {
  height: 85px; flex: none; display: flex; flex-direction: column; box-sizing: border-box;
  border: 1px solid #c3c6ca; border-radius: 3px;
  background: linear-gradient(#f3f4f6, #e7e9eb 50%, #e2e4e7);
  box-shadow: 0 1px 1px #9ea2a6;
}
.g-schowek { width: 72px; }
.g-wybierz { width: 132px; }
.g-szkic { width: 72px; }
.g-montaz { width: 206px; }
.g-relacje { width: 158px; }
.g-modyfikuj { width: 163px; }
.g-rellic { width: 96px; }
.g-szyk { width: 28px; margin-left: 1px; }
.g-konfig { width: 161px; margin-left: 1px; }
.g-okno { width: 55px; margin-left: 1px; }
.body { flex: 1; display: flex; position: relative; min-height: 0; }
.cap {
  height: 15px; line-height: 14px; text-align: center; font-size: 11px; color: #4a4f55;
  background: linear-gradient(#d6d8db, #c8cbcf); border-radius: 0 0 3px 3px; white-space: nowrap;
}
.ico { width: 16px; height: 16px; display: block; flex: none; }
.ico-s { width: 15px; height: 15px; display: block; flex: none; }
.big { display: flex; flex-direction: column; align-items: center; position: relative; }
.bigicon { width: 32px; height: 33px; margin-top: 4px; }
.bigicon-w { width: 30px; height: 28px; margin-top: 7px; }
.biglabel { text-align: center; margin-top: 3px; line-height: 13px; white-space: nowrap; font-size: 11px; }
.two { margin-top: 4px; }
.dim { color: #9ea3a8; }
.col { display: flex; flex-direction: column; justify-content: space-between; padding: 4px 0 3px; height: 69px; box-sizing: border-box; }
.chev { font-size: 9px; color: #5a6068; line-height: 16px; }
.chev-left { justify-self: start; margin-left: 2px; }

.big-paste { width: 48px; }
.big-szkic { width: 48px; }

.zaznacz {
  width: 45px; height: 66px; margin: 1px 0 0 3px; box-sizing: border-box; border: 1px solid #c8953a; border-radius: 2px;
  background: linear-gradient(#f3a94c 0, #f6b862 50%, #fbd98a 51%, #fdeaa8 100%);
  display: flex; flex-direction: column; align-items: center;
}
.zarrow { width: 22px; height: 32px; margin-top: 4px; }
.zlabel { font-size: 11px; margin-top: 2px; color: #3e3a2e; }
.zdrop { font-size: 8px; color: #6b5a30; line-height: 12px; }

.grid { display: grid; grid-auto-rows: 22px; align-items: center; justify-items: center; padding-top: 3px; }
.grid-wybierz { grid-template-columns: 22px 24px 40px; margin-left: 1px; }
.big-utworz { width: 105px; }
.big-skladaj { width: 36px; }
.grid-montaz { grid-template-columns: 27px 22px; }
.chev-montaz { position: absolute; right: 9px; top: 3px; }
.grid-relacje { grid-template-columns: 21px 22px 22px 13px 22px 22px 5px 26px; margin-left: 4px; }
.rel-sep { width: 1px; height: 22px; background: #a8acb0; }
.rel-chev { font-style: normal; }

.body-mod { justify-content: space-between; }
.mod-list { display: flex; flex-direction: column; padding: 3px 0 0 7px; }
.mod-row { height: 22px; display: flex; align-items: center; gap: 2px; white-space: nowrap; color: #4a4f55; font-size: 10.7px; }
.chev-mod { margin-left: 6px; }
.col-mod { padding: 5px 7px 0 0; height: auto; justify-content: flex-start; gap: 6px; }

.grid-rellic { grid-template-columns: repeat(4, 22px); margin-left: 4px; }
.body-szyk { flex-direction: column; align-items: center; gap: 13px; padding-top: 11px; }

.body-konfig { flex-direction: column; padding: 10px 0 0 4px; }
.combo-row { display: flex; height: 20px; }
.combo {
  width: 129px; box-sizing: border-box; border: 1px solid #b8bcc0; background: #f7f8f9; padding: 0 3px 0 3px;
  display: flex; align-items: center; justify-content: space-between; font-family: "DejaVu Sans", sans-serif; font-size: 10.2px; color: #25292d; white-space: nowrap;
}
.combo-save { width: 21px; display: flex; align-items: center; justify-content: center; background: #f3f4f5; border: 1px solid #c8ccd0; border-left: 0; }
.cfg-bar {
  margin-top: 9px; width: 152px; height: 21px; display: flex; align-items: center; justify-content: space-between;
  padding: 0 2px 0 1px; box-sizing: border-box; background: #eceef0; border-radius: 2px;
}
.big-okno { width: 53px; }
.big-okno .bigicon { margin-top: 3px; }

/* obszar roboczy */
.workspace { flex: 1; display: flex; min-height: 0; }
.sidebar {
  width: 28px; flex: none; box-sizing: border-box; display: flex; flex-direction: column; align-items: center;
  background: linear-gradient(90deg, #dde7f0, #ced9e5); padding-top: 12px; border-right: 1px solid #8d96a0;
}
.side-ico { width: 22px; height: 20px; margin-bottom: 12px; flex: none; }
.side-tab {
  margin-top: -2px; width: 24px; height: 262px; box-sizing: border-box; background: #f2f4f6; border: 1px solid #b4bcc4; border-radius: 2px 0 0 2px;
  margin-left: 4px; display: flex; flex-direction: column; align-items: center; padding-top: 3px;
}
.side-ico-s { width: 17px; height: 17px; flex: none; }
.side-text {
  writing-mode: vertical-rl; font-size: 12.3px; margin-top: 3px; white-space: nowrap; color: #3a3f45;
}
.viewport {
  flex: 1; position: relative; overflow: hidden;
  background: linear-gradient(#404040 0%, #ffffff 100%);
}
.scene { position: absolute; left: 0; top: 0; display: block; }
.shadow { fill: #efefef; stroke: #e6e6e6; }
.pl { fill: #c4d0d3; stroke: #37404a; stroke-width: 1; }
.pl-line { fill: none; stroke: #37404a; stroke-width: 1; }
.hole { fill: #868c8e; stroke: #37404a; }
.hole2 { fill: #b6c0c4; stroke: #37404a; }
.nut { fill: #aab4b8; stroke: #37404a; }
.bg-hole { fill: #7a7a7a; stroke: #37404a; }
.pipe { fill: url(#pipeg); stroke: #37404a; }
.pt { fill: #ad55cc; stroke: #4d2a6a; stroke-width: .7; }
.pt-d { fill: #8a41b2; stroke: #4d2a6a; stroke-width: .7; }
.pt-d2 { fill: #9447bb; stroke: #4d2a6a; stroke-width: .7; }
.pt-d3 { fill: #823eaa; stroke: #4d2a6a; stroke-width: .7; }
.fin { fill: #8a43b2; stroke: #4a2668; stroke-width: .8; }
.edge { fill: none; stroke: #4d2a6a; stroke-width: .8; }
.arc { fill: none; stroke: #7232a0; stroke-width: 3; }

.triad { position: absolute; width: 90px; height: 80px; overflow: visible; }
.triad-a { left: 258px; top: 120px; }
.triad-b { left: 1211px; top: 454px; }
.ghostbox { fill: #808080; fill-opacity: .5; stroke: #6e6e6e; }
.ghostline { fill: none; stroke: #6e6e6e; }
.tz { stroke: #1a2ac0; stroke-width: 3; fill: none; }
.tx { stroke: #c02028; stroke-width: 4; fill: none; }
.ty { stroke: #38d838; stroke-width: 3; fill: none; }
.lz, .lx, .ly { font-family: "Liberation Sans", sans-serif; font-size: 13px; }
.lz { fill: #2a2a9a; }
.lx { fill: #c04048; }
.ly { fill: #40b060; }

.splitter {
  position: absolute; left: 2px; top: 3px; width: 248px; height: 6px; border-radius: 3px;
  background: linear-gradient(#f2f2f2, #9e9e9e); display: flex; justify-content: center;
}
.grip { width: 40px; height: 2px; margin-top: 2px; border-top: 1px dotted #555; }
.tree { position: absolute; left: 4px; top: 14px; display: flex; flex-direction: column; }
.row { height: 16px; display: flex; align-items: center; padding-left: 7px; }
.node {
  display: flex; align-items: center; gap: 3px; height: 15px; background: #ededed; border-radius: 2px;
  padding: 0 4px 0 1px; white-space: nowrap; color: #22262a; font-size: 11px;
}
.root { height: 16px; align-self: flex-start; gap: 5px; background: #ebebeb; }
.expander { width: 17px; flex: none; display: flex; }
.plusbox {
  width: 9px; height: 9px; box-sizing: border-box; border: 1px solid #85898d; background: #f2f2f2; font-style: normal;
  font-size: 10px; line-height: 7px; text-align: center; color: #111; font-weight: 700;
}
.checkslot { width: 14px; flex: none; margin-right: 2px; display: flex; }
.check {
  width: 12px; height: 12px; box-sizing: border-box; border: 1px solid #85898d; background: #f6f7f8; font-style: normal;
  font-size: 10px; line-height: 10px; text-align: center; color: #123a5c; font-weight: 700;
}

/* pasek stanu */
.status {
  height: 24px; display: flex; align-items: stretch; box-sizing: border-box;
  background: linear-gradient(#dfe1e3, #b8bbbf 45%, #a5a8ad 55%, #b7babd);
  border-top: 1px solid #8f9397;
}
.status-msg {
  margin-left: 671px; width: 179px; text-align: center; line-height: 23px; font-size: 11.5px; color: #303438;
  border-left: 1px solid #8f9397; border-right: 1px solid #8f9397; box-sizing: border-box;
}
.status-gap { width: 24px; }
.search { width: 142px; background: #fff; line-height: 22px; padding-left: 5px; box-sizing: border-box; color: #111; font-size: 11.8px; }
.status-tools { display: flex; align-items: center; gap: 8px; margin-left: 6px; }
.status-tools .ico:first-child { margin-right: 3px; }
.zoomer { display: flex; align-items: center; margin-left: 8px; }
.zbtn {
  width: 14px; height: 14px; border-radius: 50%; border: 1px solid #5e88b4; background: #e4eef8; font-style: normal;
  text-align: center; line-height: 12px; font-size: 13px; color: #24466e; box-sizing: border-box; flex: none;
}
.ztrack { width: 116px; height: 2px; background: #f2f3f4; position: relative; }
.zthumb {
  position: absolute; left: 52px; top: -6px; width: 7px; height: 13px; background: #e8eff7; border: 1px solid #6a8fb6;
  border-radius: 1px 1px 4px 4px; box-sizing: border-box;
}

/* pasek zadań */
.taskbar {
  height: 41px; display: flex; align-items: stretch; border-top: 1px solid #25303c; box-sizing: border-box;
  background: linear-gradient(90deg, #0c0c0c 0, #0c0c0c 155px, #b0d2ef 172px, #b0d2ef 990px, #0c0c0c 1000px);
  position: relative;
}
.task-left { width: 175px; display: flex; align-items: center; flex: none; }
.start {
  width: 36px; height: 36px; margin-left: 8px; border-radius: 50%; display: flex; align-items: center; justify-content: center;
  background: radial-gradient(circle at 50% 30%, #79c4e8, #16527e 70%, #0a2a44);
}
.ie { margin-left: 28px; width: 34px; height: 34px; flex: none; }
.player { width: 20px; height: 30px; margin-left: 31px; background: #8fb4d0; display: flex; align-items: center; justify-content: center; }
.player i { width: 0; height: 0; border-left: 11px solid #f08a20; border-top: 8px solid transparent; border-bottom: 8px solid transparent; }
.task-btn {
  width: 59px; flex: none; margin-right: 3.5px; display: flex; align-items: center; justify-content: center; box-sizing: border-box;
  border: 1px solid #5a7a98; border-radius: 3px; background: linear-gradient(#cfe2f2, #a8cae6);
}
.task-explorer { margin-left: 8px; width: 52px; margin-right: 10px; background: linear-gradient(#f8d878, #f0a848 70%, #e07c20); border-color: #7c5a28; }
.task-blur { flex: 1; display: flex; align-items: center; gap: 14px; padding-left: 6px; }
.task-blur i { height: 6px; background: #6c7a88; filter: blur(3px); display: block; }
.blur-a { width: 62px; opacity: .8; }
.blur-b { width: 40px; opacity: .6; }
.blur-c { width: 120px; opacity: .6; }
.tray { width: 366px; flex: none; display: flex; align-items: center; color: #e8e8e8; position: relative; padding-left: 107px; box-sizing: border-box; font-family: "Liberation Sans", sans-serif; }
.lang { font-size: 12px; margin-right: 5px; }
.tray-kb { width: 16px; height: 14px; margin-right: 14px; }
.tray-up { font-size: 7px; margin-right: 12px; color: #ddd; }
.tray-sig { width: 14px; height: 14px; margin-right: 10px; }
.tray-flag { width: 14px; height: 16px; margin-right: 9px; }
.tray-pow { width: 14px; height: 16px; margin-right: 8px; }
.tray-vol { width: 16px; height: 14px; margin-right: 18px; }
.clock { display: flex; flex-direction: column; align-items: center; font-size: 12px; line-height: 19px; }
</style>
